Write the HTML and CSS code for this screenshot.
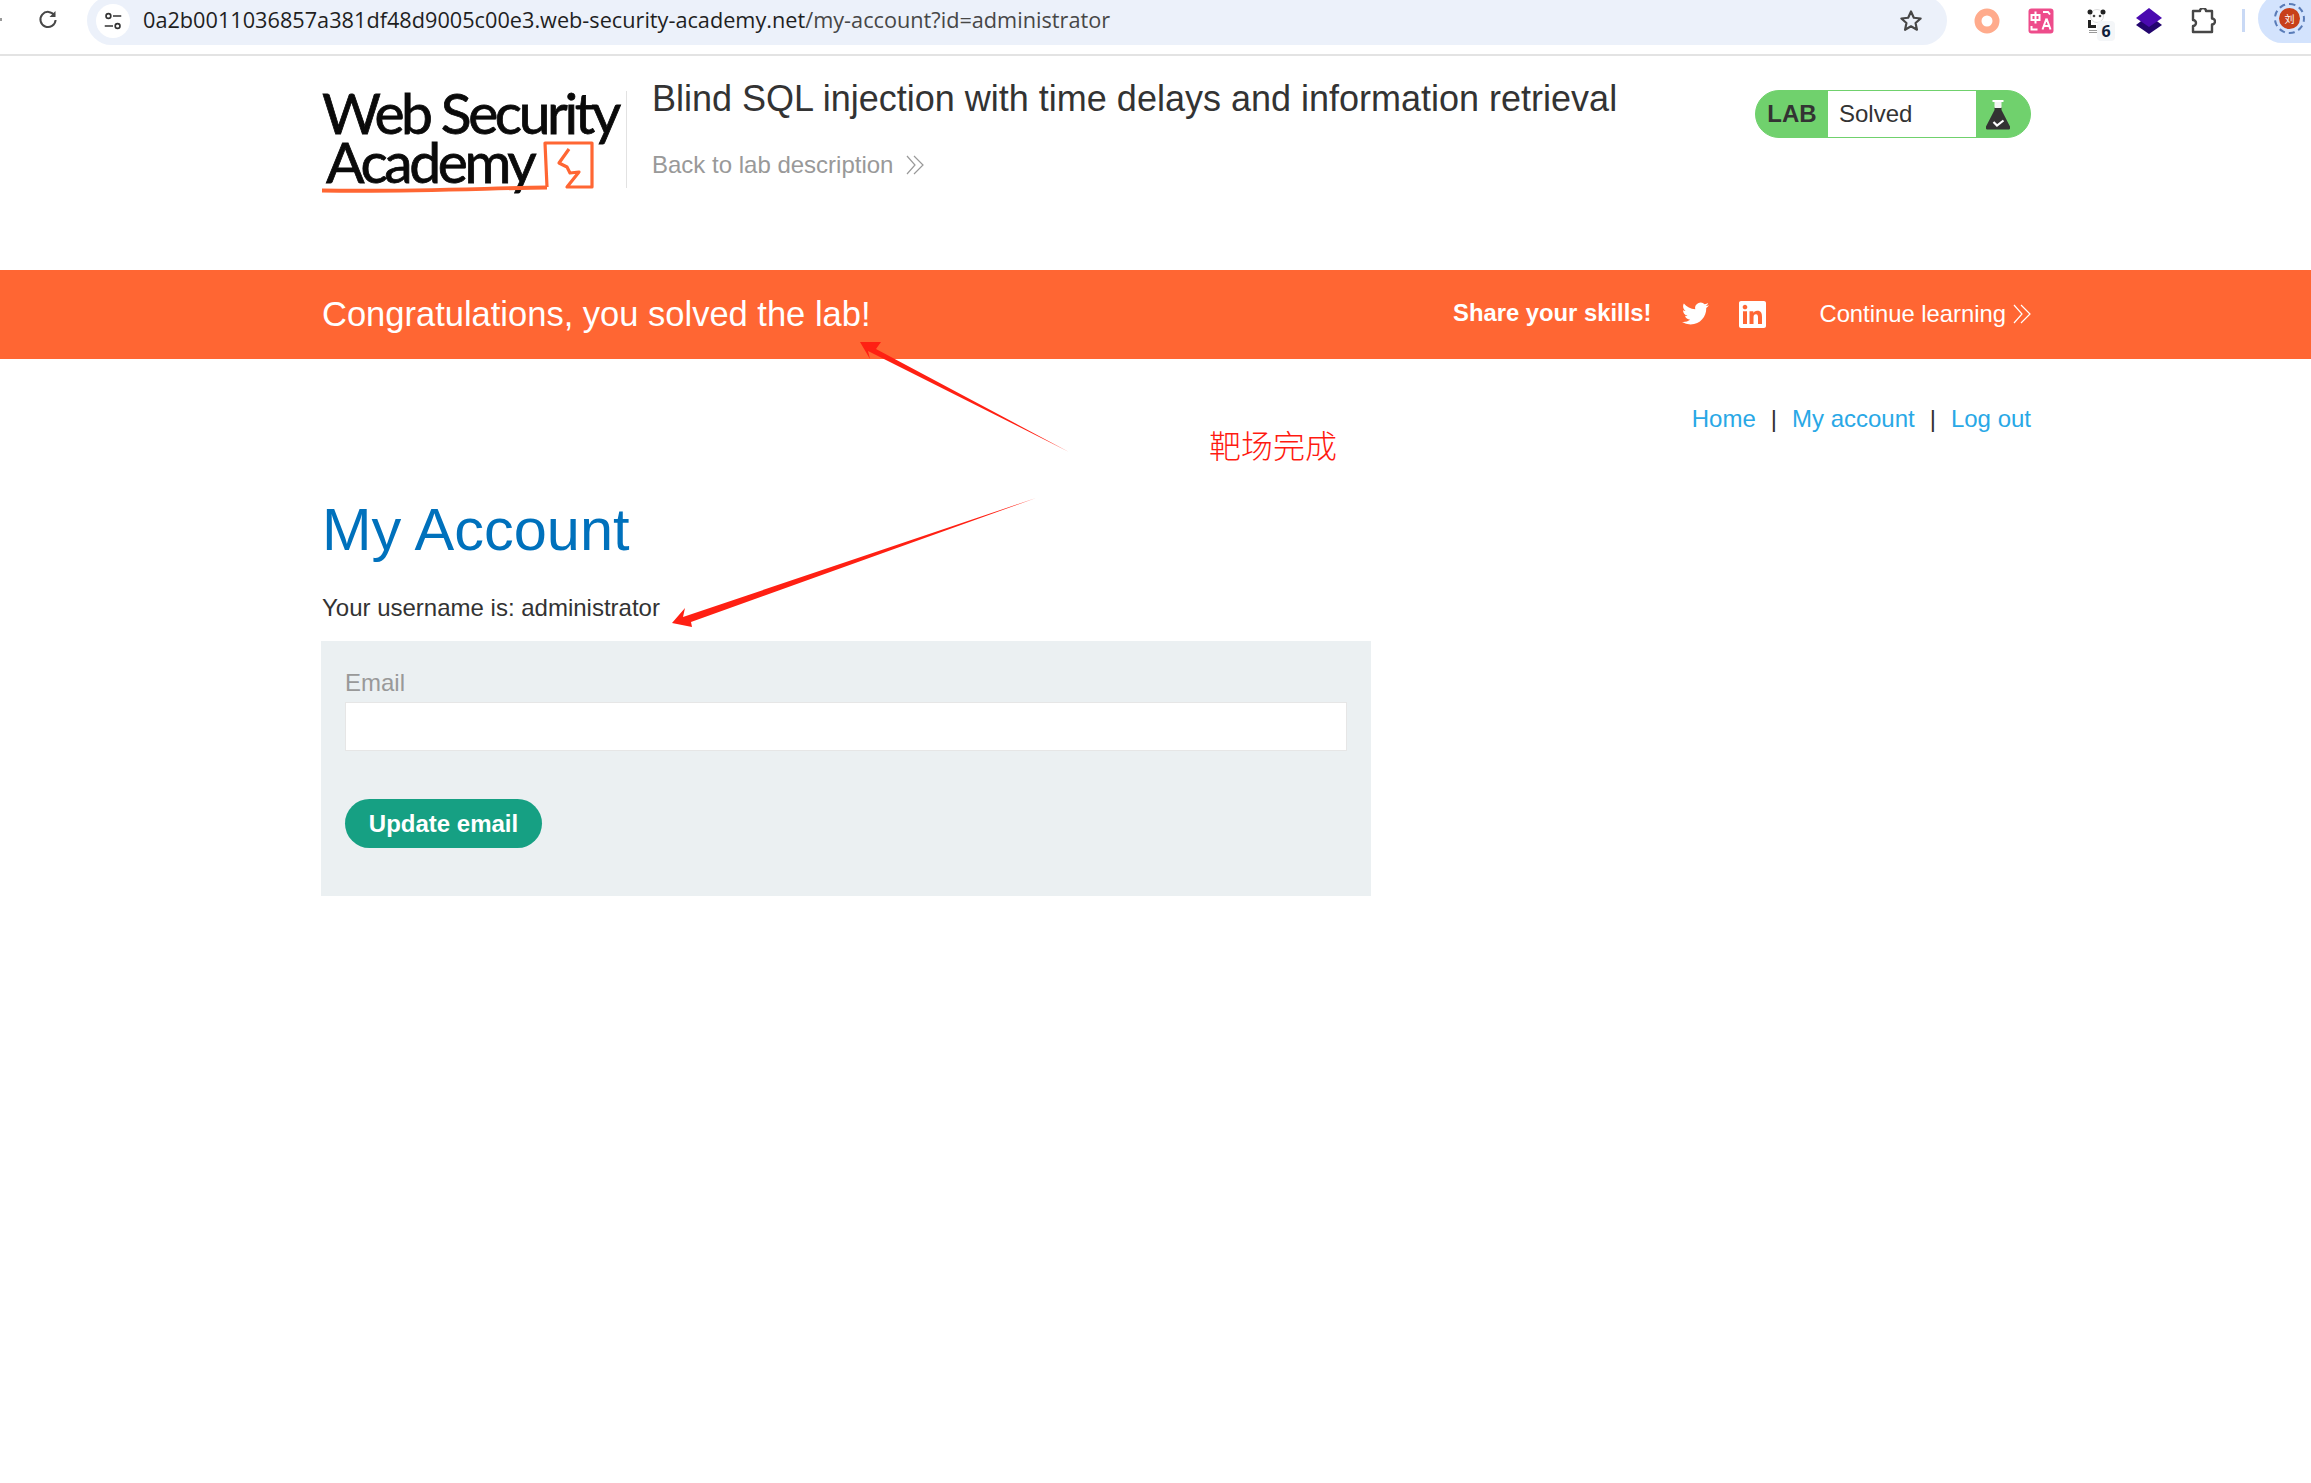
FILE: index.html
```html
<!DOCTYPE html>
<html lang="en">
<head>
<meta charset="utf-8">
<title>My Account</title>
<link rel="stylesheet" href="styles.css">
</head>
<body>
<div class="toolbar">
  <span class="back-tip"></span>
  <svg class="reload" viewBox="0 0 24 24" width="24" height="24"><path d="M18.5 8.500A7.600 7.600 0 1 0 19.600 13" fill="none" stroke="#474747" stroke-width="2"/><path d="M19.500 4v6h-6z" fill="#474747"/></svg>
  <div class="omnibox">
    <span class="tune"><svg viewBox="0 0 24 24" width="22" height="22"><circle cx="7" cy="6.500" r="2.600" fill="none" stroke="#333" stroke-width="1.800"/><path d="M12 6.500h9M3 17.500h9" stroke="#333" stroke-width="1.800"/><circle cx="17" cy="17.500" r="2.600" fill="none" stroke="#333" stroke-width="1.800"/></svg></span>
    <span class="url"><span class="url-host">0a2b0011036857a381df48d9005c00e3.web-security-academy.net</span>/my-account?id=administrator</span>
    <svg class="star" viewBox="0 0 24 24" width="26" height="26"><path d="M12 3.200l2.600 5.800 6.300.7-4.700 4.200 1.300 6.200-5.500-3.200-5.500 3.200 1.300-6.200-4.700-4.200 6.300-.7z" fill="none" stroke="#474747" stroke-width="2" stroke-linejoin="round"/></svg>
  </div>
  <div class="ext-row">
    <svg class="ext" viewBox="0 0 26 26" width="26" height="26"><circle cx="13" cy="13" r="9" fill="none" stroke="#ffab8c" stroke-width="7"/></svg>
    <span class="ext-trans">
      <svg viewBox="0 0 26 26" width="26" height="26"><rect x="0.500" y="0.500" width="25" height="25" rx="3" fill="#ee4c8b"/><path d="M3.500 7h8v5h-8zM7.500 3.500v12M15 4h5l2 2.500M3.500 18v3.500h6M18.500 10.500l-4 11M18.500 10.500l4 11M15.500 18h6" fill="none" stroke="#fff" stroke-width="2"/></svg>
    </span>
    <span class="ext-panda">
      <svg viewBox="0 0 20 24" width="20" height="24"><circle cx="10" cy="7" r="6.500" fill="#fff" stroke="#ddd"/><circle cx="3" cy="3" r="2.500" fill="#222"/><circle cx="16" cy="3" r="2.500" fill="#222"/><circle cx="7" cy="7" r="1.300" fill="#444"/><circle cx="13" cy="7" r="1.300" fill="#444"/><path d="M1 11v8h8v-3H4v-5z" fill="#222"/><path d="M2 21.500h8M2 23.500h8" stroke="#999"/></svg>
      <span class="ext-badge">6</span>
    </span>
    <svg class="ext" viewBox="0 0 26 26" width="26" height="26"><path d="M13 7L26 17 13 26 0 17z" fill="#23056e"/><path d="M13 0L26 10 13 19 0 10z" fill="#4a0ab0"/></svg>
    <svg class="ext" viewBox="0 0 26 26" width="26" height="26"><path d="M3 3h7a3 3 0 0 1 6 0h6v7.500a3 3 0 0 1 0 6V24H3v-6a3 3 0 0 0 0-6z" fill="none" stroke="#474747" stroke-width="2.400" stroke-linejoin="round"/></svg>
    <span class="ext-sep"></span>
    <span class="profile">
      <span class="avatar-ring"><span class="avatar">刘</span></span>
    </span>
  </div>
</div>

<header class="lab-header">
  <div class="logo">
    <div class="logo-line">Web Security</div>
    <div class="logo-line logo-line-two">Academy</div>
    <svg class="logo-mark" viewBox="0 0 290 110" width="290" height="110"><path d="M247 9l-10 14 8 4 3 6 9-1-12 15 25 0V3H223l2 44" fill="none" stroke="#ff6633" stroke-width="3.200" stroke-linejoin="round"/><path d="M0 50.500C90 52 170 48 225 47.500" fill="none" stroke="#ff6633" stroke-width="3.800"/></svg>
  </div>
  <div class="lab-title">
    <h2 class="lab-name">Blind SQL injection with time delays and information retrieval</h2>
    <a class="back-link">Back to lab description
      <svg class="chev" viewBox="0 0 18 20" width="18" height="20"><path d="M1 1l8 9-8 9M8 1l9 9-9 9" fill="none" stroke="#999" stroke-width="1.200"/></svg>
    </a>
  </div>
  <div class="lab-status">
    <span class="status-lab">LAB</span>
    <span class="status-text">Solved</span>
    <span class="status-icon">
      <svg viewBox="0 0 24 31" width="24" height="31"><path d="M8.500 8h7v3L24 27.500a2 2 0 0 1-2 3H2a2 2 0 0 1-2-3L8.500 11z" fill="#333"/><rect x="6.500" y="1" width="11" height="2" fill="#fff"/><rect x="8.500" y="3" width="7" height="6" fill="#f4f4f4"/><path d="M7.500 23l3.500 3.500 6.500-5" fill="none" stroke="#fff" stroke-width="2.200"/></svg>
    </span>
  </div>
</header>

<section class="banner">
  <div class="banner-inner">
    <h4 class="banner-title">Congratulations, you solved the lab!</h4>
    <div class="banner-actions">
      <span class="share">Share your skills!</span>
      <svg class="twitter" viewBox="0 0 24 24" width="29" height="27"><path fill="#fff" d="M23.953 4.570a10 10 0 01-2.825.775 4.958 4.958 0 002.163-2.723c-.951.555-2.005.959-3.127 1.184a4.920 4.920 0 00-8.384 4.482C7.690 8.095 4.067 6.130 1.640 3.162a4.822 4.822 0 00-.666 2.475c0 1.710.870 3.213 2.188 4.096a4.904 4.904 0 01-2.228-.616v.060a4.923 4.923 0 003.946 4.827 4.996 4.996 0 01-2.212.085 4.936 4.936 0 004.604 3.417 9.867 9.867 0 01-6.102 2.105c-.390 0-.779-.023-1.170-.067a13.995 13.995 0 007.557 2.209c9.053 0 13.998-7.496 13.998-13.985 0-.210 0-.420-.015-.630A9.935 9.935 0 0024 4.590z"/></svg>
      <svg class="linkedin" viewBox="0 0 24 24" width="27" height="27"><path fill="#fff" d="M20.447 20.452h-3.554v-5.569c0-1.328-.027-3.037-1.852-3.037-1.853 0-2.136 1.445-2.136 2.939v5.667H9.351V9h3.414v1.561h.046c.477-.900 1.637-1.850 3.370-1.850 3.601 0 4.267 2.370 4.267 5.455v6.286zM5.337 7.433c-1.144 0-2.063-.926-2.063-2.065 0-1.138.920-2.063 2.063-2.063 1.140 0 2.064.925 2.064 2.063 0 1.139-.925 2.065-2.064 2.065zm1.782 13.019H3.555V9h3.564v11.452zM22.225 0H1.771C.792 0 0 .774 0 1.729v20.542C0 23.227.792 24 1.771 24h20.451C23.200 24 24 23.227 24 22.271V1.729C24 .774 23.200 0 22.222 0h.003z"/></svg>
      <a class="continue">Continue learning
        <svg class="chev" viewBox="0 0 18 20" width="18" height="20"><path d="M1 1l8 9-8 9M8 1l9 9-9 9" fill="none" stroke="#fff" stroke-width="1.200"/></svg>
      </a>
    </div>
  </div>
</section>

<main class="content">
  <nav class="top-nav">
    <a class="nav-link">Home</a><span class="nav-sep">|</span><a class="nav-link">My account</a><span class="nav-sep">|</span><a class="nav-link">Log out</a>
  </nav>
  <h1 class="page-title">My Account</h1>
  <p class="username">Your username is: administrator</p>
  <form class="email-form">
    <label class="email-label">Email</label>
    <input class="email-input" type="email">
    <button class="update-btn" type="button">Update email</button>
  </form>
</main>

<svg class="annotations" viewBox="0 0 2311 1483" width="2311" height="1483">
  <polygon points="860,342 881,342 876,349 1069,452 868,351 870,359" fill="#ff2013"/>
  <polygon points="672,623 685,608 683,617 1036,498 691,622 692,627" fill="#ff2013"/>
</svg>
<span class="note">靶场完成</span>
</body>
</html>
```
FILE: styles.css
```css
* { box-sizing: border-box; }
html, body { margin: 0; padding: 0; }
body {
  width: 2311px;
  height: 1483px;
  overflow: hidden;
  background: #fff;
  color: #333;
  font-family: "Liberation Sans", Arial, sans-serif;
  font-size: 24px;
  position: relative;
}

/* browser chrome */
.toolbar {
  height: 56px;
  border-bottom: 2px solid #e3e3e3;
  display: flex;
  align-items: flex-start;
  overflow: hidden;
}
.back-tip { width: 2px; height: 3px; margin: 18px 34px 0 0; background: #999; flex: none; }
.reload { margin-top: 7px; flex: none; }
.omnibox {
  width: 1860px;
  height: 49px;
  margin: -4px 0 0 27px;
  background: #ecf1fa;
  border-radius: 25px;
  display: flex;
  align-items: center;
  padding: 0 23px 0 9px;
  flex: none;
}
.tune {
  width: 34px;
  height: 34px;
  border-radius: 50%;
  background: #fff;
  display: flex;
  align-items: center;
  justify-content: center;
  flex: none;
}
.url {
  margin: -2px 0 0 13px;
  font-family: "Open Sans", sans-serif;
  font-size: 21.7px;
  color: #474747;
  white-space: nowrap;
  flex: 1;
}
.url-host { color: #1f1f1f; }
.star { flex: none; }
.ext-row {
  flex: none;
  display: flex;
  align-items: center;
  height: 41px;
  padding-left: 27px;
}
.ext { flex: none; }
.ext-trans { display: flex; margin-left: 28px; }
.ext-panda { position: relative; display: flex; margin-left: 33px; width: 20px; }
.ext-badge {
  position: absolute;
  left: 10px;
  top: 12px;
  width: 18px;
  height: 20px;
  border-radius: 4px;
  background: #f4f6f8;
  font-family: "Noto Sans", sans-serif;
  font-weight: 700;
  font-size: 16px;
  line-height: 20px;
  text-align: center;
  color: #10203a;
}
.ext-row > .ext:nth-of-type(2) { margin-left: 29px; }
.ext-row > .ext:nth-of-type(3) { margin-left: 28px; }
.ext-sep { width: 3px; height: 23px; background: #c9d9f5; margin-left: 26px; flex: none; }
.profile {
  width: 70px;
  height: 49px;
  margin: -4px 0 0 13px;
  padding: 0 0 0 16px;
  background: #d3e3fd;
  border-radius: 25px 0 0 25px;
  display: flex;
  align-items: center;
  flex: none;
}
.avatar-ring {
  width: 31px;
  height: 31px;
  border: 2px dashed #5a7cb8;
  border-radius: 50%;
  display: flex;
  align-items: center;
  justify-content: center;
}
.avatar {
  width: 21px;
  height: 21px;
  border-radius: 50%;
  background: #c8401a;
  color: #fff;
  font-family: "Noto Sans CJK SC", sans-serif;
  font-size: 10px;
  line-height: 21px;
  text-align: center;
}

/* lab header */
.lab-header {
  height: 214px;
  margin-left: 322px;
  width: 1709px;
  display: flex;
  align-items: flex-start;
}
.logo {
  position: relative;
  width: 305px;
  height: 97px;
  margin-top: 35px;
  border-right: 1px solid #e2e2e2;
  font-family: Lato, sans-serif;
  font-size: 57px;
  line-height: 49px;
  color: #0a0a0a;
  flex: none;
}
.logo-line { margin-top: -3px; letter-spacing: -3.4px; white-space: nowrap; -webkit-text-stroke: 0.8px #0a0a0a; }
.logo-line-two { margin: 0 0 0 4px; }
.logo-mark { position: absolute; left: 0; top: 49px; overflow: visible; }
.lab-title { margin-left: 25px; flex: none; }
.lab-name {
  margin: 22px 0 0;
  font-size: 36px;
  font-weight: 400;
  line-height: 42px;
  color: #333;
  white-space: nowrap;
}
.back-link {
  display: flex;
  align-items: center;
  gap: 13px;
  margin-top: 31px;
  line-height: 28px;
  color: #999;
}
.lab-status {
  margin: 34px 0 0 auto;
  width: 276px;
  height: 48px;
  display: flex;
  border: 1px solid #70d16d;
  border-radius: 24px;
  background: #70d16d;
  overflow: hidden;
  flex: none;
}
.status-lab {
  width: 72px;
  text-align: center;
  font-weight: 700;
  line-height: 46px;
  color: #333;
  flex: none;
}
.status-text {
  width: 148px;
  background: #fff;
  padding-left: 11px;
  line-height: 46px;
  color: #333;
  flex: none;
}
.status-icon { flex: 1; display: flex; align-items: center; justify-content: center; padding-right: 10px; }

/* banner */
.banner { height: 89px; background: #ff6633; color: #fff; }
.banner-inner {
  margin-left: 322px;
  width: 1709px;
  height: 100%;
  display: flex;
  align-items: center;
  justify-content: space-between;
}
.banner-title { margin: -1px 0 0; font-size: 34.5px; font-weight: 400; line-height: 42px; }
.banner-actions { display: flex; align-items: center; font-size: 23.8px; }
.share { font-weight: 700; margin-top: -4px; }
.twitter { margin-left: 30px; margin-top: -2px; }
.linkedin { margin-left: 29px; margin-top: -1px; }
.continue { display: flex; align-items: center; gap: 7px; margin-left: 53px; margin-top: -1px; }

/* content */
.content { margin-left: 322px; width: 1709px; }
.top-nav { display: flex; justify-content: flex-end; margin-top: 46px; line-height: 28px; }
.nav-link { color: #29a8e6; }
.nav-sep { margin: 0 15px; color: #333; }
.page-title {
  margin: 62px 0 0;
  font-size: 59.5px;
  font-weight: 400;
  line-height: 70px;
  color: #0071bc;
}
.username { margin: 29px 0 0; line-height: 28px; color: #333; }
.email-form {
  width: 1050px;
  height: 255px;
  margin: 19px 0 0 -1px;
  padding: 28px 24px 0;
  background: #ebf0f2;
  display: flex;
  flex-direction: column;
  align-items: flex-start;
}
.email-label { color: #999; line-height: 28px; height: 33px; }
.email-input {
  width: 1002px;
  height: 49px;
  border: 1.5px solid #e6e6e6;
  background: #fff;
  margin: 0;
  padding: 0;
  display: block;
}
.update-btn {
  margin-top: 48px;
  width: 197px;
  height: 49px;
  border: 0;
  border-radius: 25px;
  background: #16a083;
  color: #fff;
  font-family: "Liberation Sans", Arial, sans-serif;
  font-size: 24px;
  font-weight: 700;
  padding: 0;
}

/* screenshot annotations lying over the page */
.annotations { position: absolute; left: 0; top: 0; pointer-events: none; }
.note {
  position: absolute;
  left: 1209px;
  top: 423px;
  font-family: "Noto Sans CJK SC", sans-serif;
  font-weight: 300;
  font-size: 32px;
  line-height: 42px;
  color: #ff1a10;
}
```
